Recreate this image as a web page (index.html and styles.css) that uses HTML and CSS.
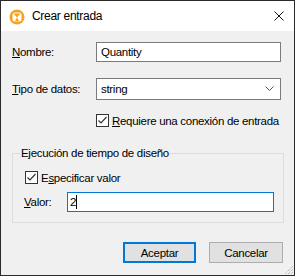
FILE: index.html
```html
<!DOCTYPE html>
<html lang="es">
<head>
  <meta charset="UTF-8" />
  <title>Crear entrada</title>
  <link rel="stylesheet" href="styles.css">
</head>
<body>
  <div class="window">
    <div class="titlebar">
      <svg class="app-icon" width="16" height="16" viewBox="0 0 16 16">
        <circle cx="8" cy="8" r="7.5" fill="#f5a31a"/>
        <rect x="3.5" y="3.5" width="9" height="9" rx="2.5" fill="#fff"/>
        <path d="M4.5 4.5 L8 8.5 L11.5 4.5 Z M6 12 L8 8.5 L10 12 Z" fill="#f5a31a"/>
      </svg>
      <span class="title">Crear entrada</span>
      <svg class="close" width="10" height="10" viewBox="0 0 10 10">
        <path d="M0.5 0.5 L9.5 9.5 M9.5 0.5 L0.5 9.5" stroke="#111" stroke-width="1"/>
      </svg>
    </div>

    <div class="content">
      <div class="form-row">
        <label class="label"><u>N</u>ombre:</label>
        <div class="textbox">Quantity</div>
      </div>
      <div class="form-row combo-row">
        <label class="label"><u>T</u>ipo de datos:</label>
        <div class="combo">
          <span>string</span>
          <svg width="9" height="6" viewBox="0 0 9 6">
            <polyline points="0.5,0.5 4.5,4.5 8.5,0.5" fill="none" stroke="#555" stroke-width="1"/>
          </svg>
        </div>
      </div>
      <div class="check-row require">
        <span class="checkbox">
          <svg width="11" height="11" viewBox="0 0 11 11">
            <polyline points="1.5,5.5 4,8 9.5,2" fill="none" stroke="#333" stroke-width="1.2"/>
          </svg>
        </span>
        <span><u>R</u>equiere una conexión de entrada</span>
      </div>

      <fieldset class="group">
        <legend>Ejecución de tiempo de diseño</legend>
        <div class="check-row">
          <span class="checkbox">
            <svg width="11" height="11" viewBox="0 0 11 11">
              <polyline points="1.5,5.5 4,8 9.5,2" fill="none" stroke="#333" stroke-width="1.2"/>
            </svg>
          </span>
          <span>E<u>s</u>pecificar valor</span>
        </div>
        <div class="value-row">
          <label class="value-label"><u>V</u>alor:</label>
          <div class="textbox focused">2<span class="caret"></span></div>
        </div>
      </fieldset>

      <div class="buttons">
        <button type="button" class="btn default">Aceptar</button>
        <button type="button" class="btn">Cancelar</button>
      </div>
    </div>

    <svg class="grip" width="10" height="10" viewBox="0 0 10 10">
      <path d="M9 1 L1 9 M9 4 L4 9 M9 7 L7 9" stroke="#a0a0a0" stroke-width="1" stroke-dasharray="1 1"/>
    </svg>
  </div>
</body>
</html>
```

FILE: styles.css
```css
body {
  margin: 0;
  font-family: "Liberation Sans", Arial, sans-serif;
  font-size: 11.5px;
  letter-spacing: -0.3px;
  color: #000;
}
.window {
  position: relative;
  width: 295px;
  height: 276px;
  box-sizing: border-box;
  border: 1px solid #2b2b2b;
  background: #f0f0f0;
  display: flex;
  flex-direction: column;
}
.titlebar {
  height: 30px;
  background: #fff;
  display: flex;
  align-items: center;
  padding-left: 8px;
}
.app-icon {
  margin-top: 1px;
}
.title {
  margin-left: 7px;
  flex: 1;
  font-size: 12px;
}
.close {
  margin-right: 10px;
}

.content {
  padding: 11px 11px 0 11px;
}
.form-row {
  display: flex;
  align-items: center;
}
.label {
  width: 84px;
}
.textbox {
  width: 185px;
  height: 20px;
  box-sizing: border-box;
  border: 1px solid #7a7a7a;
  background: #fff;
  padding: 0 4px;
  line-height: 18px;
  display: flex;
  align-items: center;
}
.combo-row {
  margin-top: 16px;
}
.combo {
  width: 185px;
  height: 22px;
  box-sizing: border-box;
  border: 1px solid #7a7a7a;
  background: #fff;
  padding: 0 6px 0 4px;
  display: flex;
  align-items: center;
  justify-content: space-between;
}
.check-row {
  display: flex;
  align-items: center;
  height: 15px;
  gap: 3px;
  white-space: nowrap;
}
.require {
  margin-top: 13px;
  margin-left: 84px;
}
.checkbox {
  flex: none;
  width: 13px;
  height: 13px;
  box-sizing: border-box;
  border: 1px solid #333;
  background: #fff;
  display: flex;
  align-items: center;
  justify-content: center;
}

.group {
  margin: 17px -1px 0 0;
  padding: 9px 8px 10px 7px;
  border: 1px solid #dcdcdc;
}
.group legend {
  padding: 0 1px;
  line-height: 16px;
}
.group .check-row {
  margin-left: 5px;
}
.value-row {
  display: flex;
  align-items: center;
  margin-top: 7px;
  margin-left: 4px;
}
.value-label {
  width: 43px;
}
.textbox.focused {
  width: 207px;
  border-color: #0078d7;
  padding-left: 2px;
}
.caret {
  display: inline-block;
  width: 1px;
  height: 14px;
  background: #000;
}

.buttons {
  display: flex;
  justify-content: flex-end;
  gap: 13px;
  margin-top: 19px;
}
.btn {
  width: 74px;
  height: 21px;
  box-sizing: border-box;
  font-family: inherit;
  font-size: inherit;
  letter-spacing: inherit;
  color: #000;
  background: #e1e1e1;
  border: 1px solid #adadad;
  padding: 0;
}
.btn.default {
  width: 73px;
  border: 2px solid #0078d7;
}
.grip {
  position: absolute;
  right: 0;
  bottom: 0;
}
```
